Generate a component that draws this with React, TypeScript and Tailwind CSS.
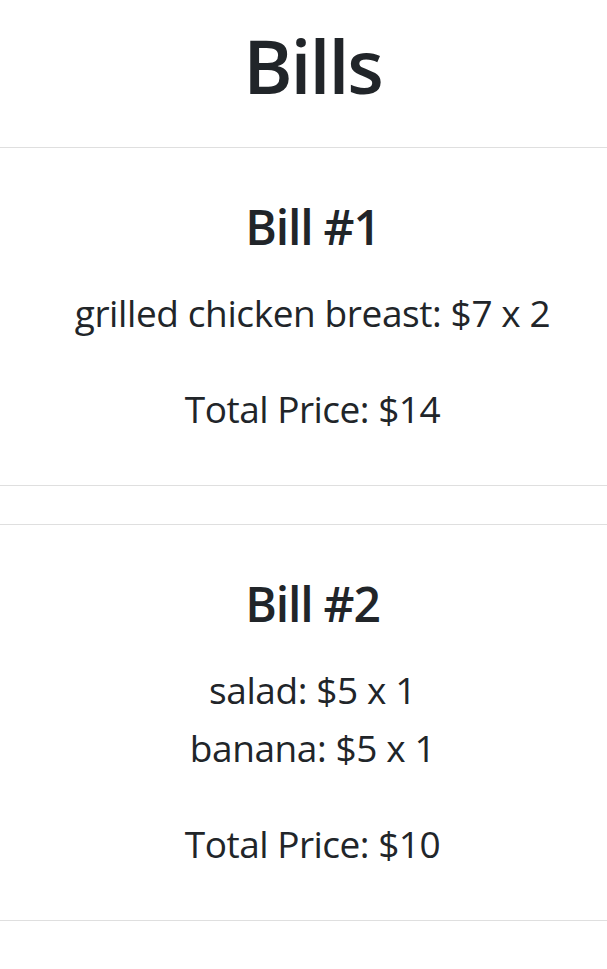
const bills = [
  { id: 1, items: [{ name: "grilled chicken breast", price: 7, qty: 2 }] },
  {
    id: 2,
    items: [
      { name: "salad", price: 5, qty: 1 },
      { name: "banana", price: 5, qty: 1 },
    ],
  },
]

export default function App() {
  return (
    <div className="min-h-screen bg-white text-[#212529] font-['Open_Sans','Noto_Sans',sans-serif]">
      <header className="h-[147px] flex items-start justify-center pt-[18px] pl-[18px]">
        <h1 className="text-[75px] leading-[94px] font-semibold tracking-[-2px]">Bills</h1>
      </header>
      {bills.map((bill) => {
        const total = bill.items.reduce((s, it) => s + it.price * it.qty, 0)
        return (
          <section
            key={bill.id}
            className="border-y border-[#dfdfdf] mb-[38px] pt-[48px] pb-[47px] pl-[18px] text-center"
          >
            <h2 className="text-[48px] leading-[62px] font-semibold tracking-[-1.2px]">Bill #{bill.id}</h2>
            <div className="mt-[26px]">
              {bill.items.map((it) => (
                <div key={it.name} className="text-[37px] leading-[58px] tracking-[-0.4px]">
                  {it.name}: ${it.price} x {it.qty}
                </div>
              ))}
            </div>
            <p className="mt-[38px] text-[37px] leading-[58px] tracking-[-0.5px]">Total Price: ${total}</p>
          </section>
        )
      })}
    </div>
  )
}
